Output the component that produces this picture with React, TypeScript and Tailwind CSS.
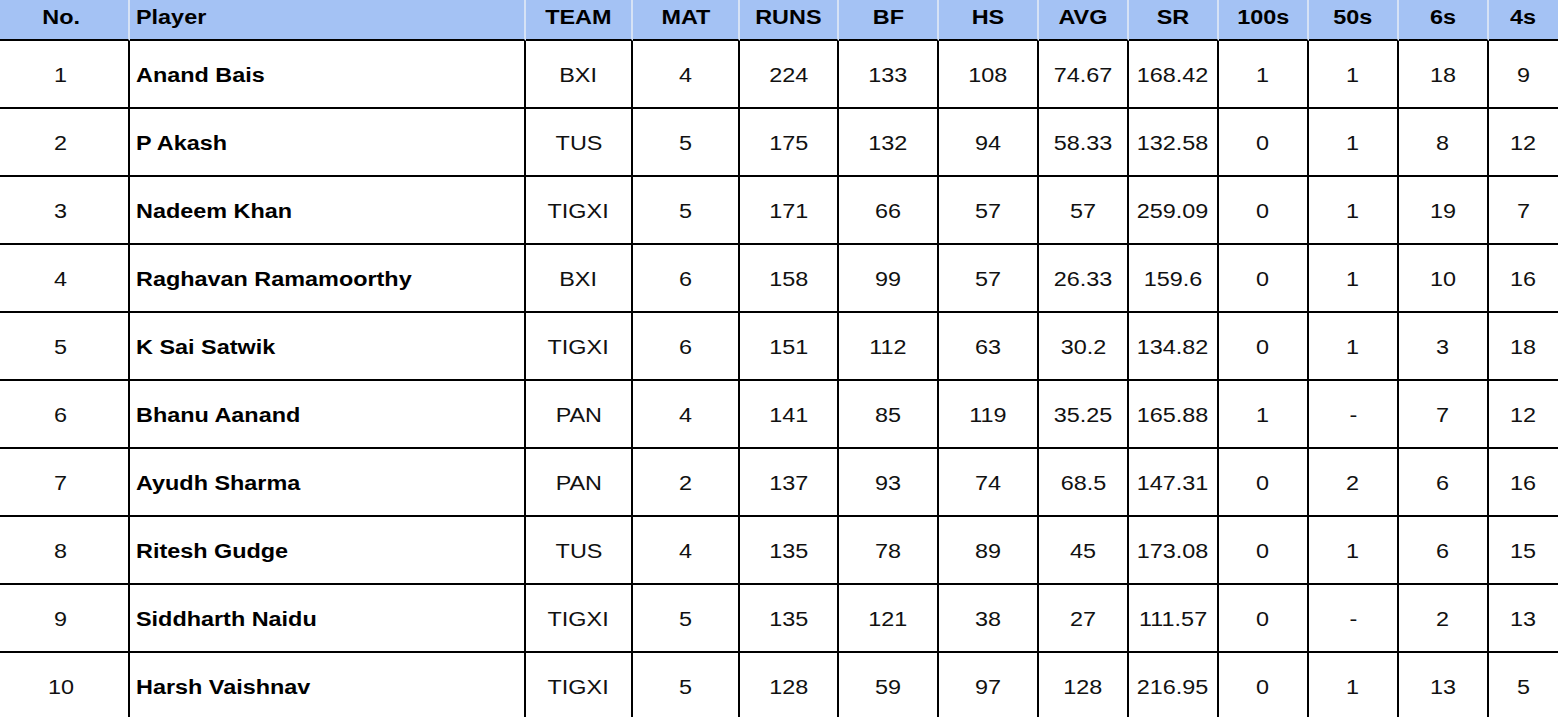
import React from "react";

const headers = ["No.", "Player", "TEAM", "MAT", "RUNS", "BF", "HS", "AVG", "SR", "100s", "50s", "6s", "4s"];

const rows: string[][] = [
  ["1", "Anand Bais", "BXI", "4", "224", "133", "108", "74.67", "168.42", "1", "1", "18", "9"],
  ["2", "P Akash", "TUS", "5", "175", "132", "94", "58.33", "132.58", "0", "1", "8", "12"],
  ["3", "Nadeem Khan", "TIGXI", "5", "171", "66", "57", "57", "259.09", "0", "1", "19", "7"],
  ["4", "Raghavan Ramamoorthy", "BXI", "6", "158", "99", "57", "26.33", "159.6", "0", "1", "10", "16"],
  ["5", "K Sai Satwik", "TIGXI", "6", "151", "112", "63", "30.2", "134.82", "0", "1", "3", "18"],
  ["6", "Bhanu Aanand", "PAN", "4", "141", "85", "119", "35.25", "165.88", "1", "-", "7", "12"],
  ["7", "Ayudh Sharma", "PAN", "2", "137", "93", "74", "68.5", "147.31", "0", "2", "6", "16"],
  ["8", "Ritesh Gudge", "TUS", "4", "135", "78", "89", "45", "173.08", "0", "1", "6", "15"],
  ["9", "Siddharth Naidu", "TIGXI", "5", "135", "121", "38", "27", "111.57", "0", "-", "2", "13"],
  ["10", "Harsh Vaishnav", "TIGXI", "5", "128", "59", "97", "128", "216.95", "0", "1", "13", "5"],
];

export default function App() {
  const font = { fontFamily: '"Liberation Sans", Arial, sans-serif' };
  return (
    <div className="w-[1558px] h-[717px] overflow-hidden bg-white text-[#111]" style={font}>
      <div className="grid grid-cols-[130px_396px_107px_107px_99px_100px_100px_90px_90px_90px_90px_90px_69px]">
        {headers.map((h, i) => (
          <div
            key={h}
            className={`h-[41px] bg-[#a4c2f4] border-b-2 border-black flex items-center pb-[5px] ${
              i < headers.length - 1 ? "border-r-2 border-r-[#d6e2f5]" : ""
            } ${i === 1 ? "justify-start pl-[6px]" : "justify-center"} ${i === 0 ? "pr-[6px]" : ""}`}
          >
            <span
              className={`inline-block text-[20px] font-bold leading-none scale-x-[1.17] text-black ${
                i === 1 ? "origin-left" : "origin-center"
              }`}
            >
              {h}
            </span>
          </div>
        ))}
        {rows.map((r, ri) =>
          r.map((c, ci) => (
            <div
              key={`${ri}-${ci}`}
              className={`h-[68px] border-b-2 border-black flex items-center pt-[1px] ${
                ci < r.length - 1 ? "border-r-2" : ""
              } ${ci === 1 ? "justify-start pl-[6px]" : "justify-center"} ${ci === 0 ? "pr-[6px]" : ""}`}
            >
              <span
                className={`inline-block text-[20px] leading-none scale-x-[1.17] ${
                  ci === 1 ? "origin-left font-bold text-black" : "origin-center"
                }`}
              >
                {c}
              </span>
            </div>
          ))
        )}
      </div>
    </div>
  );
}
